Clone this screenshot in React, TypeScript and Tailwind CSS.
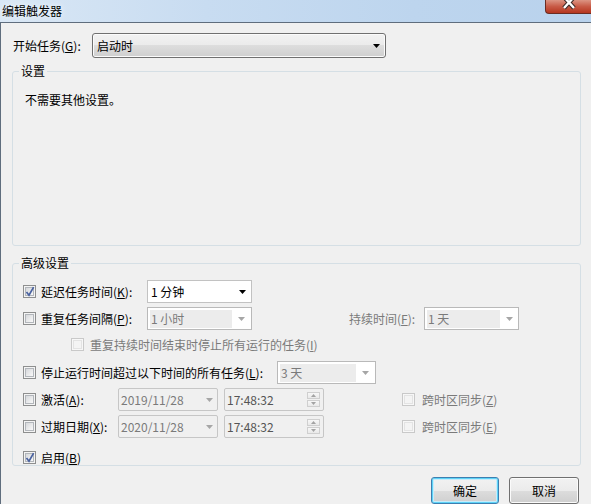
import React from "react";

type BoxProps = { checked?: boolean; disabled?: boolean };

// Win7 style check box, 13x13
const CheckBox = ({ checked, disabled }: BoxProps) => (
  <span
    className={`flex h-[13px] w-[13px] shrink-0 items-center justify-center border ${
      disabled ? "border-[#c9c9c9] bg-[#f7f7f7]" : "border-[#8e8f8f] bg-[#f4f4f4]"
    }`}
  >
    <span
      className={`relative flex h-[9px] w-[9px] items-center justify-center border ${
        disabled
          ? "border-[#e3e3e3] bg-[#f4f4f4]"
          : "border-[#b2b6bb] bg-[linear-gradient(135deg,#d6d8db,#f9f9f9)]"
      }`}
    >
      {checked && (
        <svg
          className="absolute left-[-1px] top-[-2px]"
          width="10"
          height="11"
          viewBox="0 0 10 11"
        >
          <path
            d="M1.5 6 L4 9.2 L8.6 1.2"
            fill="none"
            stroke="#4a62a0"
            strokeWidth="1.7"
          />
        </svg>
      )}
    </span>
  </span>
);

const Arrow = ({ color }: { color: string }) => (
  <svg width="7" height="4" viewBox="0 0 7 4">
    <path d="M0 0H7L3.5 4Z" fill={color} />
  </svg>
);

const SmallArrow = ({ up }: { up?: boolean }) => (
  <svg width="5" height="3" viewBox="0 0 5 3">
    <path d={up ? "M0 3H5L2.5 0Z" : "M0 0H5L2.5 3Z"} fill="#a3a3a3" />
  </svg>
);

const Spinner = () => (
  <div className="flex w-[13px] flex-col gap-[1px]">
    <span className="flex h-[7px] items-center justify-center border border-[#cfcfcf] bg-[linear-gradient(to_bottom,#f7f7f7,#e9e9e9)]">
      <SmallArrow up />
    </span>
    <span className="flex h-[7px] items-center justify-center border border-[#cfcfcf] bg-[linear-gradient(to_bottom,#f7f7f7,#e9e9e9)]">
      <SmallArrow />
    </span>
  </div>
);

// disabled editable combo box
const GrayCombo = ({ text, width, inner }: { text: string; width: string; inner: string }) => (
  <div className={`flex h-[23px] items-center border border-[#b9b9b9] bg-white ${width}`}>
    <span className={`ml-[2px] flex h-[18px] items-center bg-[#ececec] pl-[1px] text-[#7a7a7a] ${inner}`}>
      {text}
    </span>
    <span className="flex flex-1 justify-center">
      <Arrow color="#a6a6a6" />
    </span>
  </div>
);

const DateBox = ({ text }: { text: string }) => (
  <div className="flex h-[23px] w-[100px] items-center justify-between rounded-[2px] border border-[#c6c6c6] bg-[#f0f0f0] pl-[2px] pr-[4px] text-[#7a7a7a]">
    <span>{text}</span>
    <Arrow color="#a6a6a6" />
  </div>
);

const TimeBox = () => (
  <div className="flex h-[23px] w-[100px] items-center justify-between rounded-[2px] border border-[#c6c6c6] bg-[#f0f0f0] pl-[2px] pr-[3px] text-[#555]">
    <span>17:48:32</span>
    <Spinner />
  </div>
);

const App = () => {
  return (
    <div className="h-[504px] w-[591px] overflow-hidden bg-[#f0f0f0] font-['Noto_Sans_CJK_SC',sans-serif] text-[12px] leading-[16px] text-black">
      {/* title bar */}
      <div className="flex h-[22px] items-start justify-between bg-[linear-gradient(to_right,#d9e7f5,#c8dcf1_35%,#bdd5ee_70%,#b9d2ec)]">
        <span className="pl-[2px] pt-[3px] [text-shadow:0_0_6px_#ffffff]">编辑触发器</span>
        <div className="flex h-[14px] w-[46px] items-start justify-center overflow-hidden rounded-bl-[4px] border-b border-l border-[#6b2c22] bg-[linear-gradient(to_bottom,#dc9483,#c85a46_50%,#b5361f)]">
          <svg width="16" height="10" viewBox="0 0 16 10">
            <path d="M3 -3L13 8M13 -3L3 8" stroke="#3b2a28" strokeWidth="4.5" />
            <path d="M3 -3L13 8M13 -3L3 8" stroke="#ffffff" strokeWidth="2.4" />
          </svg>
        </div>
      </div>

      {/* client area */}
      <div className="flex h-[482px] flex-col border-l border-t border-[#5f6d7d] pl-[11px] pt-[10px]">
        <div className="flex h-[25px] items-center">
          <span className="w-[80px] pl-[1px]">
            开始任务(<u className="underline-offset-[1px]">G</u>):
          </span>
          <div className="flex h-[25px] w-[294px] items-center justify-between rounded-[3px] border border-[#707070] bg-[linear-gradient(to_bottom,#f2f2f2_0%,#ebebeb_50%,#dddddd_50%,#cfcfcf_100%)] pl-[4px] pr-[5px] shadow-[inset_0_0_0_1px_#fbfbfb]">
            <span>启动时</span>
            <Arrow color="#000" />
          </div>
        </div>

        {/* settings group */}
        <div className="relative mt-[13px] h-[175px] w-[569px] rounded-[3px] border border-[#d5dfe5] pl-[12px] pt-[20px]">
          <span className="absolute left-[6px] top-[-9px] bg-[#f0f0f0] px-[2px]">设置</span>
          <p>不需要其他设置。</p>
        </div>

        {/* advanced group */}
        <div className="relative mt-[17px] flex h-[203px] w-[569px] flex-col rounded-[3px] border border-[#d5dfe5] pl-[10px] pt-[16px]">
          <span className="absolute left-[6px] top-[-9px] bg-[#f0f0f0] px-[2px]">高级设置</span>

          <div className="flex h-[23px] items-center">
            <CheckBox checked />
            <span className="ml-[5px] w-[106px]">
              延迟任务时间(<u className="underline-offset-[1px]">K</u>):
            </span>
            <div className="flex h-[23px] w-[105px] items-center justify-between border border-[#c2c2c2] bg-white pl-[3px] pr-[5px]">
              <span>1 分钟</span>
              <Arrow color="#000" />
            </div>
          </div>

          <div className="mt-[4px] flex h-[23px] items-center">
            <CheckBox />
            <span className="ml-[5px] w-[106px]">
              重复任务间隔(<u className="underline-offset-[1px]">P</u>):
            </span>
            <GrayCombo text="1 小时" width="w-[105px]" inner="w-[82px]" />
            <span className="ml-[97px] w-[75px] text-[#7a7a7a]">
              持续时间(<u className="underline-offset-[1px]">F</u>):
            </span>
            <GrayCombo text="1 天" width="w-[95px]" inner="w-[73px]" />
          </div>

          <div className="mt-[3px] flex h-[23px] items-center pl-[48px]">
            <CheckBox disabled />
            <span className="ml-[6px] text-[#7a7a7a]">
              重复持续时间结束时停止所有运行的任务(<u className="underline-offset-[1px]">I</u>)
            </span>
          </div>

          <div className="mt-[5px] flex h-[23px] items-center">
            <CheckBox />
            <span className="ml-[5px] w-[236px]">
              停止运行时间超过以下时间的所有任务(<u className="underline-offset-[1px]">L</u>):
            </span>
            <GrayCombo text="3 天" width="w-[99px]" inner="w-[76px]" />
          </div>

          <div className="mt-[4px] flex h-[23px] items-center">
            <CheckBox />
            <span className="ml-[5px] w-[77px]">
              激活(<u className="underline-offset-[1px]">A</u>):
            </span>
            <DateBox text="2019/11/28" />
            <span className="ml-[6px]">
              <TimeBox />
            </span>
            <span className="ml-[78px]">
              <CheckBox disabled />
            </span>
            <span className="ml-[7px] text-[#7a7a7a]">
              跨时区同步(<u className="underline-offset-[1px]">Z</u>)
            </span>
          </div>

          <div className="mt-[4px] flex h-[23px] items-center">
            <CheckBox />
            <span className="ml-[5px] w-[77px]">
              过期日期(<u className="underline-offset-[1px]">X</u>):
            </span>
            <DateBox text="2020/11/28" />
            <span className="ml-[6px]">
              <TimeBox />
            </span>
            <span className="ml-[78px]">
              <CheckBox disabled />
            </span>
            <span className="ml-[7px] text-[#7a7a7a]">
              跨时区同步(<u className="underline-offset-[1px]">E</u>)
            </span>
          </div>

          <div className="mt-[13px] flex h-[13px] items-center">
            <CheckBox checked />
            <span className="ml-[5px]">
              启用(<u className="underline-offset-[1px]">B</u>)
            </span>
          </div>
        </div>

        {/* buttons */}
        <div className="mt-[11px] flex w-[567px] justify-end gap-[10px]">
          <button className="h-[27px] w-[68px] rounded-[3px] border border-[#3c7fb1] bg-[linear-gradient(to_bottom,#f2f2f2_0%,#ebebeb_50%,#dddddd_50%,#cfcfcf_100%)] shadow-[inset_0_0_0_1px_#5ed3f7,inset_0_0_0_2px_#c7ecfb]">
            确定
          </button>
          <button className="h-[27px] w-[70px] rounded-[3px] border border-[#707070] bg-[linear-gradient(to_bottom,#f2f2f2_0%,#ebebeb_50%,#dddddd_50%,#cfcfcf_100%)] shadow-[inset_0_0_0_1px_#fbfbfb]">
            取消
          </button>
        </div>
      </div>
    </div>
  );
};

export default App;
